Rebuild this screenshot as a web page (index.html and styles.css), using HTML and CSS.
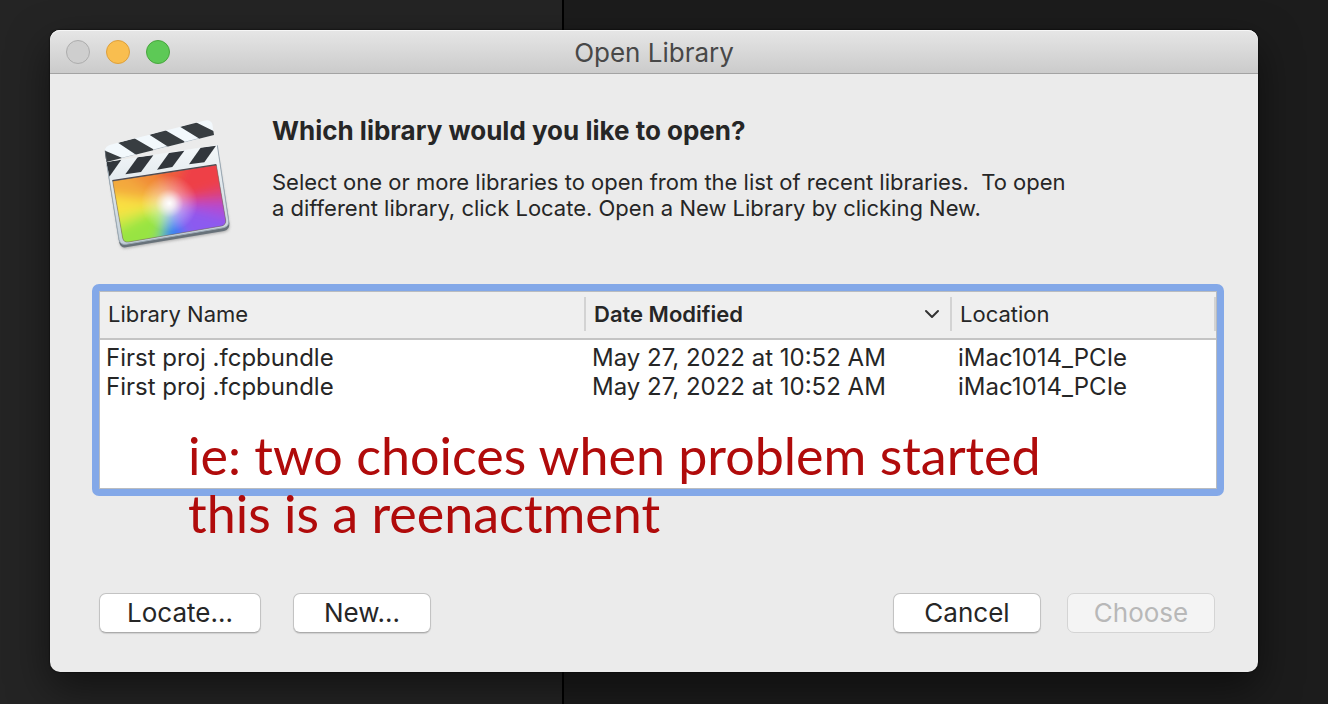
FILE: index.html
```
<!DOCTYPE html>
<html lang="en">
<head>
    <meta charset="UTF-8">
    <meta name="viewport" content="width=device-width, initial-scale=1.0">
    <title>Open Library</title>
    <link rel="stylesheet" href="styles.css">
</head>
<body>
    <main class="window">
        <header class="titlebar">
            <div class="lights">
                <button class="light close" aria-label="Close" disabled></button>
                <button class="light minimize" aria-label="Minimize"></button>
                <button class="light zoom" aria-label="Zoom"></button>
            </div>
            <h1>Open Library</h1>
        </header>

        <div class="content">
            <section class="intro">
                <svg class="app-icon" viewBox="0 0 480 450" aria-hidden="true">
                    <defs>
                        <clipPath id="screen">
                            <path d="M68 213 L379 165 L407 330 Q409 344 395 348 L115 396 Q101 398 98 384 Z"/>
                        </clipPath>
                        <clipPath id="arm">
                            <path d="M44 122 Q46 108 61 104 L342 32 Q361 27 367 42 L372 75 L49 156 Z"/>
                        </clipPath>
                        <clipPath id="slate">
                            <path d="M49 156 L382 105 L390 164 L60 210 Z"/>
                        </clipPath>
                        <radialGradient id="glow" gradientUnits="userSpaceOnUse" cx="238" cy="280" r="85">
                            <stop offset="0" stop-color="#fff"/>
                            <stop offset="0.2" stop-color="#fff" stop-opacity="0.8"/>
                            <stop offset="0.5" stop-color="#fff" stop-opacity="0.35"/>
                            <stop offset="1" stop-color="#fff" stop-opacity="0"/>
                        </radialGradient>
                        <linearGradient id="edge" x1="0" y1="0" x2="0" y2="1">
                            <stop offset="0" stop-color="#f4f8fa"/>
                            <stop offset="1" stop-color="#c3cfd8"/>
                        </linearGradient>
                        <filter id="blend" x="-20%" y="-20%" width="140%" height="140%">
                            <feGaussianBlur stdDeviation="18"/>
                        </filter>
                        <filter id="shade" x="-20%" y="-20%" width="140%" height="140%">
                            <feGaussianBlur stdDeviation="5"/>
                        </filter>
                    </defs>
                    <!-- board -->
                    <path d="M60 200 L386 150 L418 348 Q420 364 400 367 L110 415 Q94 417 90 402 Z" fill="#777" opacity="0.55" filter="url(#shade)"/>
                    <path d="M49 158 L382 107 L418 340 Q420 359 402 363 L108 412 Q92 414 88 399 Z" fill="#68727a"/>
                    <path d="M49 156 L382 105 L416 332 Q418 349 401 353 L108 403 Q91 405 87 389 Z" fill="url(#edge)"/>
                    <path d="M51 166 L87 389 Q91 405 108 403 L401 353 Q418 349 416 332 L382 106" fill="none" stroke="#9ba9b4" stroke-width="3"/>
                    <g clip-path="url(#slate)" fill="#31363c">
                        <path d="M49 156 L94 149 L58 200 Z"/>
                        <path d="M143 142 L190 136 L153 186 L106 193 Z"/>
                        <path d="M237 129 L283 122 L247 171 L201 179 Z"/>
                        <path d="M332 113 L378 107 L343 157 L297 163 Z"/>
                    </g>
                    <!-- colour wheel screen -->
                    <g clip-path="url(#screen)">
                        <rect x="50" y="150" width="380" height="260" fill="#f28b3a"/>
                        <g filter="url(#blend)">
                            <path d="M238 280 L0 100 L0 260 Z" fill="#f3a93c"/>
                            <path d="M238 280 L0 110 L190 80 Z" fill="#f18b38"/>
                            <path d="M238 280 L170 80 L340 60 Z" fill="#ee5e3d"/>
                            <path d="M238 280 L310 80 L480 90 L480 230 Z" fill="#ee4046"/>
                            <path d="M238 280 L480 210 L480 285 Z" fill="#d9437c"/>
                            <path d="M238 280 L480 270 L480 350 Z" fill="#b04cd5"/>
                            <path d="M238 280 L480 340 L330 480 Z" fill="#8c5af0"/>
                            <path d="M238 280 L340 480 L205 480 Z" fill="#397cf5"/>
                            <path d="M238 280 L215 480 L165 480 Z" fill="#60c68a"/>
                            <path d="M238 280 L175 480 L0 460 L0 370 Z" fill="#98e443"/>
                            <path d="M238 280 L0 400 L0 330 Z" fill="#cdea47"/>
                            <path d="M238 280 L0 345 L0 245 Z" fill="#fae142"/>
                        </g>
                        <circle cx="238" cy="280" r="85" fill="url(#glow)"/>
                    </g>
                    <path d="M68 213 L379 165 L407 330 Q409 344 395 348 L115 396 Q101 398 98 384 Z" fill="none" stroke="#59616a" stroke-opacity="0.5" stroke-width="3"/>
                    <path d="M67 212 L379 164" stroke="#4d4950" stroke-width="4"/>
                    <!-- clapper arm -->
                    <g clip-path="url(#arm)">
                        <path d="M30 20 H380 V180 H30 Z" fill="#f2f8fc"/>
                        <g fill="#383d41">
                            <path d="M40 120 L95 143 L95 160 L40 170 Z"/>
                            <path d="M84 98 L133 85 L190 118 L190 125 L138 140 L138 134 Z"/>
                            <path d="M178 74 L225 60 L283 94 L283 102 L232 115 L232 109 Z"/>
                            <path d="M270 50 L316 36 L376 66 L376 80 L326 90 L326 85 Z"/>
                        </g>
                        <path d="M94 145 L138 134 M190 120 L232 109 M283 97 L326 86" stroke="#aeb8c0" stroke-width="3"/>
                        <path d="M44 122 L49 156" stroke="#6f777e" stroke-width="4"/>
                    </g>
                </svg>
                <div class="message">
                    <h2>Which library would you like to open?</h2>
                    <p>Select one or more libraries to open from the list of recent libraries.&nbsp; To open<br>a different library, click Locate. Open a New Library by clicking New.</p>
                </div>
            </section>

            <section class="library-list" tabindex="0">
                <table>
                    <colgroup>
                        <col class="col-name">
                        <col class="col-date">
                        <col class="col-location">
                    </colgroup>
                    <thead>
                        <tr>
                            <th scope="col"><div class="heading">Library Name</div></th>
                            <th scope="col" class="sorted" aria-sort="descending">
                                <div class="heading">
                                    Date Modified
                                    <svg class="chevron" viewBox="0 0 16 10" aria-hidden="true"><path d="M2 2 L8 8 L14 2"/></svg>
                                </div>
                            </th>
                            <th scope="col"><div class="heading">Location</div></th>
                        </tr>
                    </thead>
                    <tbody>
                        <tr>
                            <td>First proj .fcpbundle</td>
                            <td>May 27, 2022 at 10:52 AM</td>
                            <td>iMac1014_PCIe</td>
                        </tr>
                        <tr>
                            <td>First proj .fcpbundle</td>
                            <td>May 27, 2022 at 10:52 AM</td>
                            <td>iMac1014_PCIe</td>
                        </tr>
                    </tbody>
                </table>
                <p class="note">ie: two choices when problem started<br>this is a reenactment</p>
            </section>

            <footer class="actions">
                <button class="btn btn-locate">Locate...</button>
                <button class="btn btn-new">New...</button>
                <button class="btn btn-cancel">Cancel</button>
                <button class="btn btn-choose" disabled>Choose</button>
            </footer>
        </div>
    </main>
</body>
</html>
```
FILE: styles.css
```
* {
    box-sizing: border-box;
}
body {
    margin: 0;
    min-height: 100vh;
    padding: 30px 70px 32px 50px;
    display: flex;
    font-family: Inter, "Liberation Sans", sans-serif;
    color: #262626;
    background: linear-gradient(to right, #242424 562px, #000 562px, #000 564px, #1c1c1c 564px);
}
h1, h2, p {
    margin: 0;
}
.window {
    flex: 1;
    display: flex;
    flex-direction: column;
    background-color: #ebebeb;
    border-radius: 10px;
    box-shadow: 0 16px 40px rgba(0,0,0,0.5), 0 0 2px #000;
}
.titlebar {
    display: grid;
    grid-template-columns: 1fr auto 1fr;
    align-items: center;
    height: 44px;
    padding: 0 16px;
    border-bottom: 1px solid #a3a3a3;
    border-radius: 10px 10px 0 0;
    background: linear-gradient(#e6e6e6, #cbcbcb);
    box-shadow: inset 0 1px 0 #f6f6f6;
}
.titlebar h1 {
    padding-top: 2px;
    font-size: 26px;
    font-weight: 400;
    line-height: 32px;
    color: #484848;
}
.lights {
    display: flex;
    gap: 16px;
}
.light {
    width: 24px;
    height: 24px;
    padding: 0;
    border: 1px solid #adadad;
    border-radius: 50%;
    background-color: #cecece;
}
.minimize {
    border-color: #dea03c;
    background-color: #f9be4f;
}
.zoom {
    border-color: #48a63e;
    background-color: #5dc956;
}
.content {
    flex: 1;
    display: flex;
    flex-direction: column;
    padding: 36px 34px 39px 40px;
}
.intro {
    display: flex;
    gap: 22px;
    height: 174px;
}
.app-icon {
    width: 160px;
    height: 150px;
    flex: none;
}
.message h2 {
    margin: 4px 0 21px;
    font-size: 26px;
    font-weight: 700;
    line-height: 34px;
}
.message p {
    font-size: 22px;
    line-height: 26px;
    white-space: nowrap;
}
.library-list {
    position: relative;
    height: 212px;
    margin: 0 0 0 2px;
    border: 7px solid #83a8e8;
    border-radius: 7px;
    background-color: #fff;
    box-shadow: inset 0 0 0 1px #b9bcc0;
    padding: 1px;
    outline: none;
}
table {
    width: 100%;
    table-layout: fixed;
    border-collapse: collapse;
}
.col-name {
    width: 486px;
}
.col-date {
    width: 366px;
}
th {
    height: 47px;
    padding: 0 0 2px;
    border-bottom: 2px solid #c4c4c4;
    background-color: #efefef;
    font-size: 22px;
    font-weight: 400;
    line-height: 26px;
    text-align: left;
}
.heading {
    display: flex;
    align-items: center;
    justify-content: space-between;
    height: 34px;
    padding: 0 10px 0 8px;
    border-right: 2px solid #d3d3d3;
}
.sorted {
    font-weight: 600;
}
.chevron {
    width: 16px;
    height: 10px;
    fill: none;
    stroke: #333;
    stroke-width: 2;
    stroke-linecap: round;
    stroke-linejoin: round;
}
td {
    height: 29px;
    padding: 0 6px;
    font-size: 24px;
    line-height: 29px;
}
tbody::before {
    content: "";
    display: block;
    height: 3px;
}
/* handwritten remark laid over the list */
.note {
    position: absolute;
    top: 135px;
    left: 89px;
    font-family: Lato, sans-serif;
    font-size: 52px;
    line-height: 58px;
    color: #b00b0b;
    white-space: nowrap;
}
.actions {
    display: flex;
    align-items: center;
    margin-top: auto;
    padding: 0 9px;
}
.btn {
    height: 40px;
    padding: 0;
    border: 1px solid #c3c3c3;
    border-bottom-color: #ababab;
    border-radius: 7px;
    background-color: #fff;
    box-shadow: 0 1px 1px rgba(0,0,0,0.12);
    color: #262626;
    font-family: inherit;
    font-size: 26px;
    line-height: 32px;
}
.btn-locate {
    width: 162px;
    margin-right: 32px;
}
.btn-new {
    width: 138px;
}
.btn-cancel {
    width: 148px;
    margin-left: auto;
    margin-right: 26px;
}
.btn-choose {
    width: 148px;
}
.btn:disabled {
    border-color: #d4d4d4;
    background-color: #f4f4f4;
    box-shadow: none;
    color: #b8b8b8;
}
```
